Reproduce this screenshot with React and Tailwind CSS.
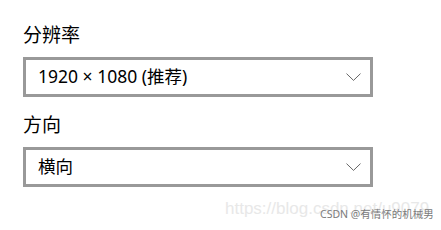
const FONT = "font-['Noto_Sans','Noto_Sans_CJK_SC',sans-serif]";

function Chevron() {
  return (
    <svg width="15" height="8" viewBox="0 0 15 8" fill="none" className="shrink-0">
      <path d="M0.5 0.6 L7.5 7.4 L14.5 0.6" stroke="#555" strokeWidth="0.9" />
    </svg>
  );
}

function Select({ value }) {
  return (
    <div className="w-[350px] h-[40px] border-[3px] border-[#999] bg-white flex items-center justify-between pl-[12px] pr-[9px]">
      <span className="text-[17.5px] text-black leading-none">{value}</span>
      <Chevron />
    </div>
  );
}

export default function App() {
  return (
    <div className={`relative w-[441px] h-[230px] bg-white overflow-hidden pl-[23px] pt-[22px] ${FONT}`}>
      <div className="text-[19px] leading-[26px] text-black mb-[9px]">分辨率</div>
      <Select value="1920 × 1080 (推荐)" />
      <div className="text-[19px] leading-[26px] text-black mt-[15px] mb-[9px]">方向</div>
      <Select value="横向" />

      {/* watermark */}
      <div className="absolute left-[225px] top-[198px] text-[17px] leading-[22px] text-[#e8e8e8] font-['Liberation_Sans',sans-serif] whitespace-nowrap">
        https://blog.csdn.net/u9079
      </div>
      <div className="absolute left-[320px] top-[207px] text-[10.5px] leading-[14px] text-[#7a7a7a] whitespace-nowrap">
        CSDN @有情怀的机械男
      </div>
    </div>
  );
}
